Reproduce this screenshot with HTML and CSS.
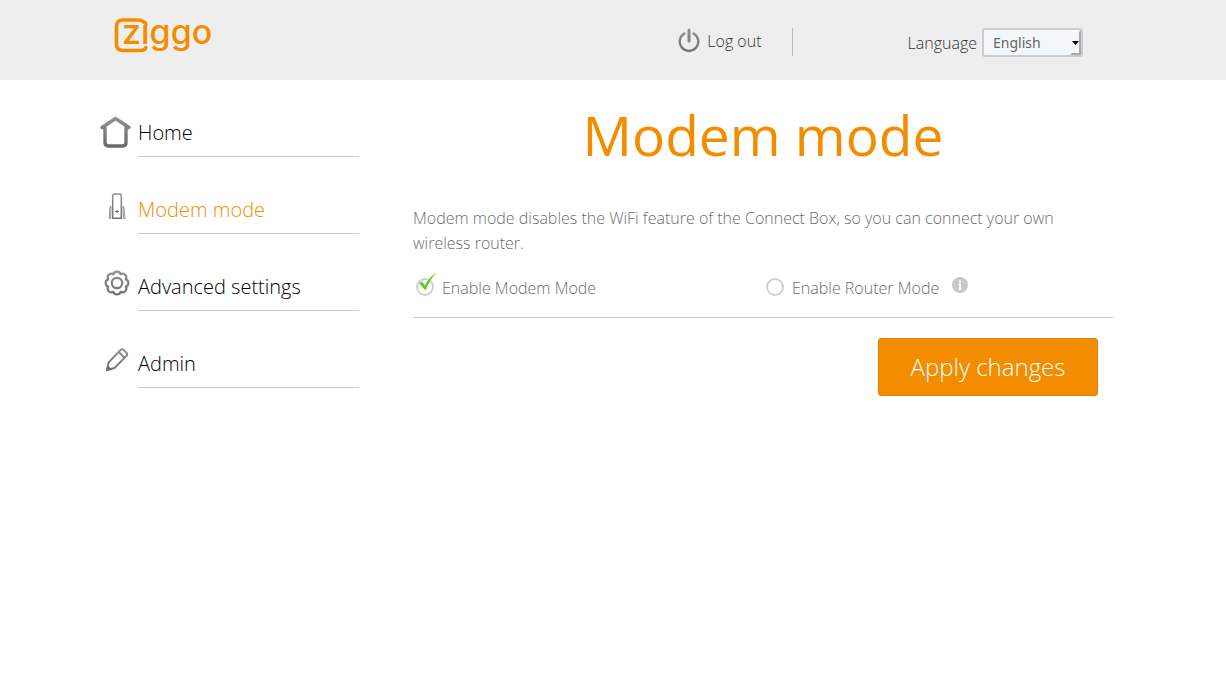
FILE: index.html
```html
<!DOCTYPE html>
<html lang="en">
<head>
<meta charset="utf-8">
<title>Modem mode</title>
<link rel="stylesheet" href="styles.css">
</head>
<body>
<svg class="defs" width="0" height="0" aria-hidden="true">
  <linearGradient id="steel" gradientUnits="userSpaceOnUse" x1="0" y1="0" x2="0" y2="32"><stop offset="0" stop-color="#929295"/><stop offset="1" stop-color="#69696c"/></linearGradient>
</svg>
<header class="topbar">
  <div class="container topbar-inner">
    <a class="logo" href="#" aria-label="ziggo">
      <svg width="100" height="38" viewBox="0 0 100 38">
        <path d="M29 4.500Q27.500 3 23 3H9Q2.500 3 2.500 9.500V27Q2.500 33.500 9 33.500H26Q31 33.500 31.800 30.500M29 4.500Q31.500 5.500 32 7" fill="none" stroke="#f48c00" stroke-width="3.600" stroke-linecap="round"/>
        <text class="logo-text" x="8" y="27">zıggo</text>
      </svg>
    </a>
    <a class="logout" href="#">
      <svg width="22" height="26" viewBox="0 0 22 26" fill="none" stroke="url(#steel)" stroke-linecap="round"><path d="M6.500 5.500A9.300 9.300 0 1 0 15.500 5.500" stroke-width="2.400"/><path d="M11 2V13" stroke-width="3"/></svg>
      <span>Log out</span>
    </a>
    <div class="language">
      <label for="lang">Language</label>
      <span class="select-wrap">
        <select id="lang"><option>English</option></select>
        <svg class="select-arrow" width="14" height="25" viewBox="0 0 14 25" aria-hidden="true"><path d="M14 0V25H3L5 23H12V2Z" fill="#aaa"/><path d="M5 11H12L8.500 15Z" fill="#000"/></svg>
      </span>
    </div>
  </div>
</header>
<div class="container page">
  <nav class="menu">
    <a class="item" href="#">
      <svg class="item-icon" width="32" height="32" viewBox="0 0 32 32" fill="none" stroke="url(#steel)" stroke-width="3.400" stroke-linejoin="round" stroke-linecap="round"><path d="M5 11.500H2L15.500 2.500L29 11.500H26V26.500Q26 30 22.500 30H8.500Q5 30 5 26.500Z"/></svg>
      <span class="item-label">Home</span>
    </a>
    <a class="item active" href="#">
      <svg class="item-icon" width="32" height="32" viewBox="0 0 32 32" fill="none" stroke="url(#steel)" stroke-width="1.500"><path d="M12.700 26.300V4Q12.700 2 14.500 2H19.500Q21.300 2 21.300 4V26.300Z"/><path d="M15 19.500H19M17 18V21" stroke-width="1.200"/><path d="M11 14L10.600 26.300H9L10 16ZM23 14L23.400 26.300H25L24 16Z" stroke-width="0.800"/></svg>
      <span class="item-label">Modem mode</span>
    </a>
    <a class="item" href="#">
      <svg class="item-icon" width="32" height="32" viewBox="0 0 32 32" fill="none" stroke="url(#steel)" stroke-width="2.200" stroke-linejoin="round"><circle cx="17" cy="14" r="5.200"/><path d="M13.400 5.200A3.800 3.800 0 0 1 20.600 5.200A3.800 3.800 0 0 1 25.800 10.400A3.800 3.800 0 0 1 25.800 17.600A3.800 3.800 0 0 1 20.600 22.800A3.800 3.800 0 0 1 13.400 22.800A3.800 3.800 0 0 1 8.200 17.600A3.800 3.800 0 0 1 8.200 10.400A3.800 3.800 0 0 1 13.400 5.200Z"/></svg>
      <span class="item-label">Advanced settings</span>
    </a>
    <a class="item" href="#">
      <svg class="item-icon" width="32" height="32" viewBox="0 0 32 32" fill="none" stroke="url(#steel)" stroke-width="1.900" stroke-linejoin="round"><path d="M7 24L8.500 16.500L20.500 4Q22 2.600 23.700 4L26.200 6.500Q28 8 26.500 9.800L14.500 22L7 24ZM19 6L24.500 12"/><path d="M6 25.500L7.500 19L12 23.500Z" fill="#6f6f72" stroke="none"/></svg>
      <span class="item-label">Admin</span>
    </a>
  </nav>
  <main class="content">
    <h1 class="title">Modem mode</h1>
    <p class="intro">Modem mode disables the WiFi feature of the Connect Box, so you can connect your own wireless router.</p>
    <form class="form">
      <div class="options">
        <label class="option">
          <span class="radio-wrap"><input type="radio" name="mode" checked><svg class="tick" width="22" height="22" viewBox="0 0 22 22" aria-hidden="true"><path d="M3 11L6 9.500L9 13.500Q13 5 20 1Q13 9 9.500 18.500Z" fill="#5fcd1e"/></svg></span>
          <span>Enable Modem Mode</span>
        </label>
        <div class="choice">
          <label class="option">
            <span class="radio-wrap"><input type="radio" name="mode"></span>
            <span>Enable Router Mode</span>
          </label>
          <button class="info" type="button" aria-label="Information">
            <svg width="16" height="16" viewBox="0 0 16 16"><circle cx="8" cy="8" r="8" fill="#c8c8c8"/><path d="M6.500 6.500H9V11.500H10V12.500H6.500V11.500H7.200V7.500H6.500ZM7 3.500H9V5.300H7Z" fill="#fff"/></svg>
          </button>
        </div>
      </div>
      <div class="actions"><button class="apply" type="submit">Apply changes</button></div>
    </form>
  </main>
</div>
</body>
</html>
```
FILE: styles.css
```css
* { box-sizing: border-box; }
body {
  margin: 0;
  background: #fff;
  color: #6c6c6c;
  font-family: "Open Sans", "Noto Sans", sans-serif;
  font-size: 16px;
  font-weight: 340;
}
a { color: inherit; text-decoration: none; }
.defs { position: absolute; }
.container {
  max-width: 1026px;
  margin: 0 auto;
}
.topbar {
  background: #eee;
  color: #333;
  height: 80px;
}
.topbar-inner {
  display: flex;
  align-items: flex-start;
  padding: 16px 43px 0 13px;
}
.logo svg { display: block; overflow: visible; }
.logo { padding: 1px 0 0 1px; }
.logo-text {
  font-family: Inter, sans-serif;
  font-size: 34px;
  font-weight: 550;
  fill: #f48c00;
}
.logout {
  display: flex;
  align-items: center;
  gap: 7px;
  height: 28px;
  margin: 12px 0 0 auto;
  padding-right: 30px;
  padding-bottom: 3px;
  border-right: 1px solid #bbb;
  line-height: 24px;
}
.language {
  display: flex;
  align-items: center;
  gap: 5px;
  margin: 12px 0 0 115px;
}
.select-wrap { position: relative; display: flex; }
.language select {
  appearance: none;
  width: 101px;
  height: 29px;
  padding: 0 9px;
  border: 2px solid #ccc;
  border-radius: 3px;
  background: #f4f7fa;
  color: #666;
  font: 400 14px "Noto Sans", sans-serif;
}
.select-arrow {
  position: absolute;
  right: 2px;
  top: 2px;
  pointer-events: none;
}
.page {
  display: flex;
  align-items: flex-start;
  justify-content: space-between;
  padding-right: 13px;
}
.menu {
  display: flex;
  flex-direction: column;
  width: 259px;
}
.item {
  display: flex;
  height: 77px;
  color: #000;
  font-size: 20px;
}
.item.active { color: #f48c00; }
.item-icon { flex: none; margin-top: 36px; }
.item:not(:first-child) .item-icon { margin-top: 35px; }
.item-label {
  flex: 1;
  margin-left: 6px;
  padding-top: 39px;
  line-height: 28px;
  border-bottom: 1px solid #ccc;
}
.content { width: 700px; }
.title {
  margin: 19px 0 0;
  color: #f48c00;
  font-size: 55px;
  font-weight: 430;
  line-height: 72px;
  text-align: center;
}
.intro {
  margin: 35px 0 0;
  line-height: 25px;
}
.options {
  display: grid;
  grid-template-columns: 1fr 1fr;
  height: 62px;
  padding-top: 20px;
  border-bottom: 1px solid #ccc;
}
.option {
  display: flex;
  align-items: flex-start;
  gap: 8px;
  padding-left: 3px;
  line-height: 24px;
}
.choice { display: flex; align-items: flex-start; gap: 13px; }
.radio-wrap { position: relative; display: flex; }
.radio-wrap input {
  appearance: none;
  width: 18px;
  height: 18px;
  margin: 2px 0 0;
  border: 2px solid #d0d0d0;
  border-radius: 50%;
}
.tick { position: absolute; left: 0; top: -4px; }
.info {
  margin: 1px 0 0;
  padding: 0;
  border: 0;
  background: none;
  line-height: 0;
}
.actions {
  display: flex;
  justify-content: flex-end;
  padding: 20px 15px 0 0;
}
.apply {
  width: 220px;
  height: 58px;
  padding: 0 0 2px;
  border: 1px solid #e58300;
  border-radius: 3px;
  background: #f48c00;
  color: #fff;
  font: 320 24px "Open Sans", sans-serif;
}
```
